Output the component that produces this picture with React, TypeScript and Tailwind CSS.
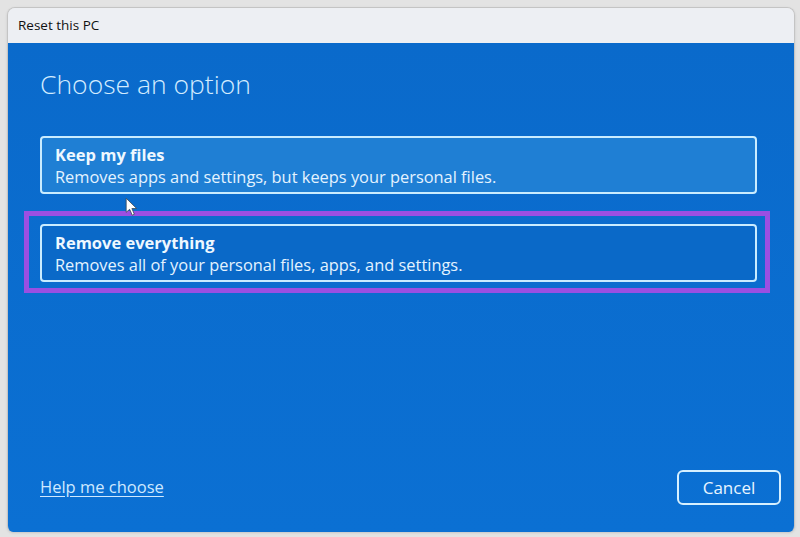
import React from "react";

const font = { fontFamily: '"Open Sans", "Noto Sans", Arial, sans-serif' };

function Cursor() {
  return (
    <svg
      className="absolute left-[117px] top-[154px]"
      width="14"
      height="20"
      viewBox="0 0 12 17"
    >
      <path
        d="M1 1 L1 13 L4 10.5 L6.2 15.5 L8 14.7 L5.9 9.8 L10 9.8 Z"
        fill="#ffffff"
        stroke="#3a4a5a"
        strokeWidth="0.7"
        strokeLinejoin="round"
      />
    </svg>
  );
}

interface OptionProps {
  title: string;
  text: string;
  light?: boolean;
}

function Option({ title, text, light }: OptionProps) {
  return (
    <div
      className={
        "h-[58px] rounded-[4px] border-2 border-[#c9ecff] pl-[13px] pt-[6px] " +
        (light ? "bg-[#1f7fd4]" : "bg-[#0a69c8]")
      }
    >
      <div className="text-[16.5px] leading-[22px] font-bold text-[#eef8ff]">{title}</div>
      <div className="text-[16.4px] leading-[22px] text-[#e4f3ff]">{text}</div>
    </div>
  );
}

export default function App() {
  return (
    <div
      className="w-[800px] h-[537px] bg-[#e3e3e3] pt-[7px] pl-[7px] pr-[5px] overflow-hidden"
      style={font}
    >
      <div className="h-[525px] flex flex-col rounded-t-[8px] rounded-b-[6px] overflow-hidden border border-[#c4c4c4] border-b-0 shadow-sm">
        {/* title bar */}
        <div className="h-[35px] shrink-0 bg-[#edeff3] flex items-center pl-[10px] text-[13.5px] text-[#111]">
          Reset this PC
        </div>

        {/* blue page */}
        <div className="relative flex-1 flex flex-col bg-gradient-to-b from-[#0a6acb] to-[#0b70d3] pl-[32px] pr-[37px] pb-[27px]">
          <h1 className="pt-[24px] text-[26.5px] leading-[35px] font-light text-[#d3ecff]">
            Choose an option
          </h1>

          <div className="mt-[34px]">
            <Option
              light
              title="Keep my files"
              text="Removes apps and settings, but keeps your personal files."
            />
          </div>

          <div className="mt-[17px] -ml-[16px] -mr-[13px] border-[5px] border-[#9a4fe2] pt-[8px] pb-[6px] pl-[11px] pr-[8px]">
            <Option
              title="Remove everything"
              text="Removes all of your personal files, apps, and settings."
            />
          </div>

          <div className="mt-auto -mr-[24px] flex items-center justify-between">
            <a className="text-[16.5px] text-[#cfe9ff] underline underline-offset-[3px] cursor-pointer">
              Help me choose
            </a>
            <button className="w-[104px] h-[35px] rounded-[6px] border-2 border-[#d6f0ff] text-[17px] text-[#e8f5ff]">
              Cancel
            </button>
          </div>

          <Cursor />
        </div>
      </div>
    </div>
  );
}
